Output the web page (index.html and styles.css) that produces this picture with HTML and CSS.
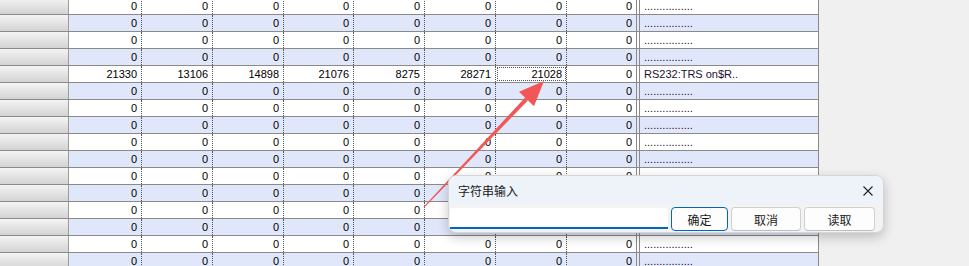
FILE: index.html
```html
<!DOCTYPE html>
<html lang="en">
<head>
    <meta charset="utf-8">
    <title>Grid</title>
    <link rel="stylesheet" href="styles.css">
</head>
<body>
    <div class="grid">
        <div class="row"><div class="head"></div><div class="num first">0</div><div class="num">0</div><div class="num">0</div><div class="num narrow">0</div><div class="num">0</div><div class="num">0</div><div class="num">0</div><div class="num narrow last">0</div><div class="txt">................</div></div>
        <div class="row alt"><div class="head"></div><div class="num first">0</div><div class="num">0</div><div class="num">0</div><div class="num narrow">0</div><div class="num">0</div><div class="num">0</div><div class="num">0</div><div class="num narrow last">0</div><div class="txt">................</div></div>
        <div class="row"><div class="head"></div><div class="num first">0</div><div class="num">0</div><div class="num">0</div><div class="num narrow">0</div><div class="num">0</div><div class="num">0</div><div class="num">0</div><div class="num narrow last">0</div><div class="txt">................</div></div>
        <div class="row alt"><div class="head"></div><div class="num first">0</div><div class="num">0</div><div class="num">0</div><div class="num narrow">0</div><div class="num">0</div><div class="num">0</div><div class="num">0</div><div class="num narrow last">0</div><div class="txt">................</div></div>
        <div class="row"><div class="head"></div><div class="num first">21330</div><div class="num">13106</div><div class="num">14898</div><div class="num narrow">21076</div><div class="num">8275</div><div class="num">28271</div><div class="num selected">21028</div><div class="num narrow last">0</div><div class="txt">RS232:TRS on$R..</div></div>
        <div class="row alt"><div class="head"></div><div class="num first">0</div><div class="num">0</div><div class="num">0</div><div class="num narrow">0</div><div class="num">0</div><div class="num">0</div><div class="num">0</div><div class="num narrow last">0</div><div class="txt">................</div></div>
        <div class="row"><div class="head"></div><div class="num first">0</div><div class="num">0</div><div class="num">0</div><div class="num narrow">0</div><div class="num">0</div><div class="num">0</div><div class="num">0</div><div class="num narrow last">0</div><div class="txt">................</div></div>
        <div class="row alt"><div class="head"></div><div class="num first">0</div><div class="num">0</div><div class="num">0</div><div class="num narrow">0</div><div class="num">0</div><div class="num">0</div><div class="num">0</div><div class="num narrow last">0</div><div class="txt">................</div></div>
        <div class="row"><div class="head"></div><div class="num first">0</div><div class="num">0</div><div class="num">0</div><div class="num narrow">0</div><div class="num">0</div><div class="num">0</div><div class="num">0</div><div class="num narrow last">0</div><div class="txt">................</div></div>
        <div class="row alt"><div class="head"></div><div class="num first">0</div><div class="num">0</div><div class="num">0</div><div class="num narrow">0</div><div class="num">0</div><div class="num">0</div><div class="num">0</div><div class="num narrow last">0</div><div class="txt">................</div></div>
        <div class="row"><div class="head"></div><div class="num first">0</div><div class="num">0</div><div class="num">0</div><div class="num narrow">0</div><div class="num">0</div><div class="num">0</div><div class="num">0</div><div class="num narrow last">0</div><div class="txt">................</div></div>
        <div class="row alt"><div class="head"></div><div class="num first">0</div><div class="num">0</div><div class="num">0</div><div class="num narrow">0</div><div class="num">0</div><div class="num">0</div><div class="num">0</div><div class="num narrow last">0</div><div class="txt">................</div></div>
        <div class="row"><div class="head"></div><div class="num first">0</div><div class="num">0</div><div class="num">0</div><div class="num narrow">0</div><div class="num">0</div><div class="num">0</div><div class="num">0</div><div class="num narrow last">0</div><div class="txt">................</div></div>
        <div class="row alt"><div class="head"></div><div class="num first">0</div><div class="num">0</div><div class="num">0</div><div class="num narrow">0</div><div class="num">0</div><div class="num">0</div><div class="num">0</div><div class="num narrow last">0</div><div class="txt">................</div></div>
        <div class="row"><div class="head"></div><div class="num first">0</div><div class="num">0</div><div class="num">0</div><div class="num narrow">0</div><div class="num">0</div><div class="num">0</div><div class="num">0</div><div class="num narrow last">0</div><div class="txt">................</div></div>
        <div class="row alt"><div class="head"></div><div class="num first">0</div><div class="num">0</div><div class="num">0</div><div class="num narrow">0</div><div class="num">0</div><div class="num">0</div><div class="num">0</div><div class="num narrow last">0</div><div class="txt">................</div></div>
    </div>

    <!-- annotation arrow pointing at the edited cell -->
    <svg class="arrow" width="969" height="266" viewBox="0 0 969 266">
        <polygon points="423.6,206.8 424.4,207.4 527.9,100.4 525.1,97.6" fill="#f25757"/>
        <polygon points="519,91.8 544,81 534,106.2" fill="#f25757"/>
    </svg>

    <div class="dialog">
        <div class="dialog-title">
            <span>字符串输入</span>
            <svg class="close" width="10" height="10" viewBox="0 0 10 10">
                <path d="M0.5 0.5 L9.5 9.5 M9.5 0.5 L0.5 9.5" stroke="#222" stroke-width="1.1" fill="none"/>
            </svg>
        </div>
        <div class="dialog-body">
            <input type="text" class="dialog-input">
            <button type="button" class="btn btn-ok">确定</button>
            <button type="button" class="btn btn-cancel">取消</button>
            <button type="button" class="btn btn-read">读取</button>
        </div>
    </div>
</body>
</html>
```

FILE: styles.css
```css
body {
    margin: 0;
    background-color: #f0f0f0;
    font-family: "Liberation Sans", Arial, sans-serif;
    font-size: 11px;
    color: #000;
    height: 266px;
    overflow: hidden;
    position: relative;
}

.grid {
    width: 819px;
    margin-top: -2px;
}

.row {
    display: flex;
    height: 17px;
    box-sizing: border-box;
    border-bottom: 1px solid #8a8a8a;
    background-color: #fff;
}
.row.alt {
    background-color: #e1e7fb;
}

.head {
    width: 69px;
    flex: none;
    box-sizing: border-box;
    border-right: 1px solid #9c9c9c;
    background: linear-gradient(#f4f4f4, #d3d3d3);
}

.num {
    width: 71px;
    flex: none;
    box-sizing: border-box;
    border-right: 1px dotted #555;
    padding-right: 4px;
    text-align: right;
    line-height: 16px;
}
.num.first {
    width: 73px;
}
.num.narrow {
    width: 70px;
}
.num.last {
    border-right: 1px solid #8a8a8a;
}
.num.selected {
    outline: 1px dotted #555;
    outline-offset: -2px;
}

.txt {
    width: 180px;
    flex: none;
    box-sizing: border-box;
    margin-left: 2px;
    border-left: 1px solid #8a8a8a;
    border-right: 1px solid #8a8a8a;
    padding-left: 4px;
    line-height: 16px;
    color: #1a1030;
    white-space: nowrap;
    overflow: hidden;
}

.arrow {
    position: absolute;
    left: 0;
    top: 0;
    pointer-events: none;
}

.dialog {
    position: absolute;
    left: 448px;
    top: 175px;
    width: 436px;
    height: 58px;
    box-sizing: border-box;
    border: 1px solid #d6d6d6;
    border-radius: 8px;
    background-color: #f3f3f3;
    box-shadow: 0 4px 12px rgba(0, 0, 0, 0.22);
    overflow: hidden;
    font-family: "Noto Sans CJK SC", "Liberation Sans", sans-serif;
    font-size: 12px;
    color: #1a1a1a;
}

.dialog-title {
    height: 29px;
    display: flex;
    align-items: center;
    justify-content: space-between;
    padding: 0 10px 0 9px;
    background-color: #eef2f9;
}

.dialog-body {
    display: flex;
    align-items: flex-start;
    gap: 3px;
    padding: 2px 0 0 1px;
}

.dialog-input {
    width: 218px;
    height: 21px;
    margin-top: 1px;
    box-sizing: border-box;
    border: none;
    border-bottom: 2px solid #0067c0;
    border-radius: 3px 3px 0 0;
    background-color: #fff;
    outline: none;
}

.btn {
    height: 24px;
    box-sizing: border-box;
    border: 1px solid #d0d0d0;
    border-bottom-color: #bdbdbd;
    border-radius: 4px;
    background-color: #fdfdfd;
    font-family: "Noto Sans CJK SC", "Liberation Sans", sans-serif;
    font-size: 12px;
    color: #1a1a1a;
    padding: 0;
}
.btn-ok {
    width: 57px;
    border-color: #0067c0;
}
.btn-cancel {
    width: 70px;
}
.btn-read {
    width: 71px;
}
```
